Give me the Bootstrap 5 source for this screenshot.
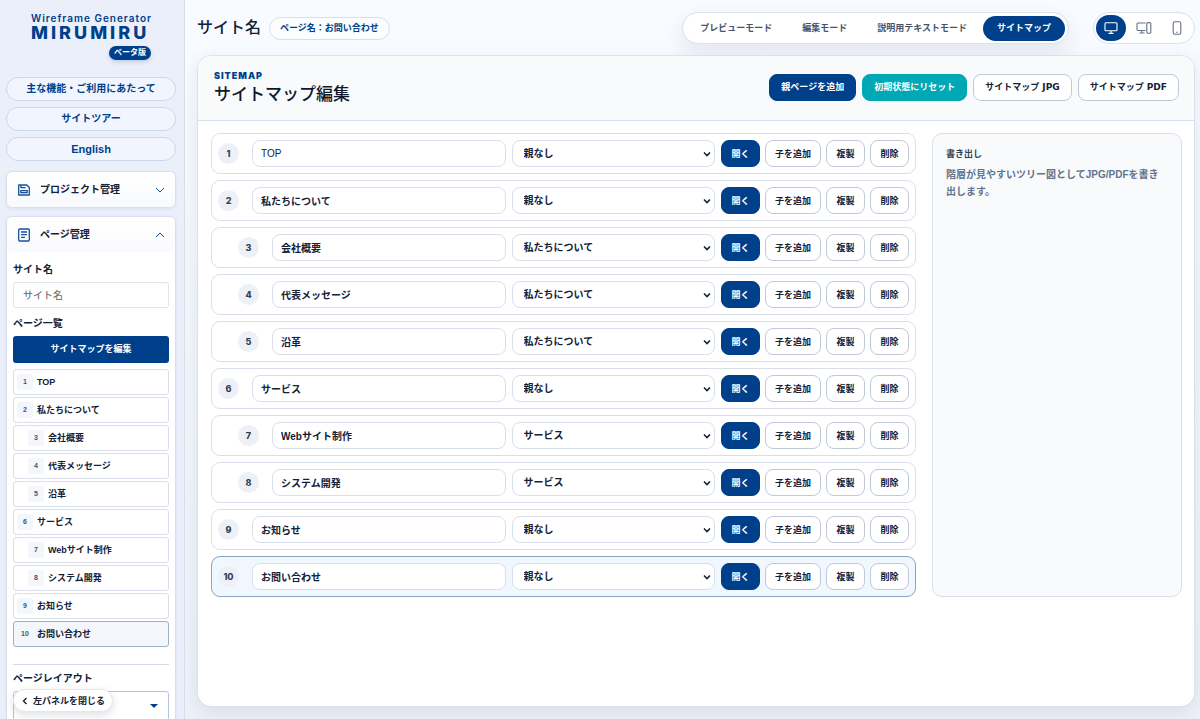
<!DOCTYPE html>
<html lang="ja">
<head>
<meta charset="utf-8">
<meta name="viewport" content="width=device-width, initial-scale=1">
<title>MIRUMIRU – サイトマップ編集</title>
<link href="https://cdn.jsdelivr.net/npm/bootstrap@5.3.0/dist/css/bootstrap.min.css" rel="stylesheet">
<style>
:root{--navy:#003f8a;--teal:#00a8b5;--ink:#142136;--line:#d9dfea;--jp:"Liberation Sans","Noto Sans CJK JP",sans-serif}
body{font-family:var(--jp);font-size:10px;line-height:16px;font-weight:700;color:var(--ink);background:linear-gradient(#f8fbff,#eef1f8)}
button,input,select{font-weight:inherit;color:inherit}
.btn{font-weight:700}
.app-shell{height:100vh;min-height:480px}
.side{width:185px;background:#ebeff9;border-right:1px solid #d6deed;position:relative}
.side-scroll{height:100%;overflow-y:auto;scrollbar-width:none;padding:14px 8px 0 6px}
.side-scroll::-webkit-scrollbar{display:none}
.brand{width:120px;color:var(--navy);margin:0 0 17px 25px}
.brand-sub{font:600 10px/9px Inter,sans-serif;letter-spacing:1px;white-space:nowrap}
.brand-name{font:800 18px/20px Inter,sans-serif;letter-spacing:3px}
.beta{background:var(--navy);color:#fff;font-size:8px;line-height:14px;padding:0 5px;box-shadow:0 2px 4px #003f8a30;margin-top:3px}
.side-pills{gap:6px;margin-bottom:10px}
.side-pill{height:24px;border:1px solid #c9d8ee;background:#f1f6fe;color:var(--navy);font-size:10px;line-height:16px;padding:0}
.side-pill:lang(en){font-size:11px}
.side-card{background:#fff;border:1px solid #d8e0ee;border-radius:6px;box-shadow:0 1px 3px #1f3f7014}
.side-head{height:35px;width:100%;border:0;background:linear-gradient(#fff,#f8fafd);border-radius:6px;padding:0 10px;gap:9px}
.side-head svg{color:#17509a}
.side-body{padding:10px 6px 40px}
.side-input{height:26px;font-size:10px;padding:0 9px;border:1px solid #e1e5ec;border-radius:3px;font-weight:500}
.side-input::placeholder{color:#777}
.side-main,.side-main:hover{height:27px;background:var(--navy);color:#fff;border:0;border-radius:3px;font-size:9px;padding:0}
.page-list{gap:2px;margin-top:6px}
.page-item-btn{height:26px;border:1px solid #d9dfea;border-radius:3px;background:#fff;padding:0 3px;gap:4px;font-size:9px;text-align:left}
.page-item-btn.nested{padding-left:14px}
.page-item-btn i{width:16px;height:16px;line-height:16px;border-radius:3px;background:#f3f6fa;font-size:7px;font-style:normal;text-align:center;color:#475569;flex:none}
.page-item-btn.current{background:#f3f6fb;border-color:#9eb0cc}
.layout-block{border-top:1px solid #d5dce8;margin-top:17px;padding-top:6px}
.layout-select{height:30px;border:1px solid #b8c6da;border-radius:3px;padding:0 30px 0 10px;font-size:10px;background-color:#fff;background-position:right 9px center;background-size:10px;background-image:url("data:image/svg+xml,%3Csvg xmlns='http://www.w3.org/2000/svg' viewBox='0 0 10 10'%3E%3Cpath d='M1 3h8L5 7z' fill='%23003f8a'/%3E%3C/svg%3E")}
.side-close{position:absolute;left:13px;bottom:7px;height:23px;border:1px solid #e3e7ee;background:#fff;box-shadow:0 3px 8px #1f2f5026;padding:0 7px 0 8px;gap:5px;font-size:9px}
.workspace{padding:12px 5px 12px 12px}
.topbar{margin-bottom:11px;min-height:32px}
.site-title{font-size:16px;line-height:24px;font-weight:500}
.page-chip{border:1px solid #d4e0ef;background:#fbfdff;color:var(--navy);height:23px;font-size:9px;line-height:21px;padding:0 10px}
.mode-bar,.device-bar{background:#fff;border:1px solid #dae1ec;height:32px}
.mode-bar{padding:0 3px;box-shadow:0 8px 20px #1f2f5018;gap:2px}
.device-bar{padding:0 2px;gap:3px}
.mode-btn{height:25px;font-size:9px;line-height:16px;padding:0 14px;color:#46536a;border:0}
.mode-btn.active{background:var(--navy)!important;color:#fff!important}
.device-btn{width:30px;height:26px;padding:0;border:0;color:#667085;background:none}
.device-btn.active{background:var(--navy);color:#fff}
.editor{background:#fff;border:1px solid #dce2ec;border-radius:14px;box-shadow:0 6px 18px #1f2f5018;overflow:hidden}
.editor-head{background:#f8fafc;border-bottom:1px solid var(--line);padding:11px 15px 13px 16px;min-height:65px}
.eyebrow{font:900 9px/15px Inter,sans-serif;letter-spacing:1px;color:var(--navy)}
.editor-title{font-size:17px;line-height:24px;font-weight:500;margin:0;color:#0f172a}
.tool-btn{height:27px;border:1px solid #c1c9d8;border-radius:8px;background:#fff;font:700 9px/16px "DejaVu Sans","Noto Sans CJK JP",sans-serif;padding:0 9px;min-width:39px;white-space:nowrap}
.tool-btn.solid{background:var(--navy);border-color:var(--navy);color:#fff}
.tool-btn.reset{background:var(--teal);border-color:var(--teal);color:#fff}
.head-tools{gap:6px}
.head-tools .tool-btn{padding:0 11px}
.editor-body{display:grid;grid-template-columns:minmax(0,1fr) 250px;gap:16px;padding:12px 12px 13px 13px;align-items:stretch}
.tree{gap:6px}
.tree-row{display:grid;grid-template-columns:minmax(0,287fr) minmax(0,203fr) auto;gap:6px;align-items:center;border:1px solid var(--line);border-radius:9px;padding:6px;background:#fff}
.tree-row.current{background:#f1f7fe;border-color:#8ba2c4}
.name-cell{gap:13px}
.name-cell.nested{padding-left:20px}
.num{width:21px;height:21px;background:#edf1f7;font:800 9px/21px Inter,sans-serif;text-align:center;color:#334155;flex:none}
.field{height:27px;width:100%;min-width:0;border:1px solid var(--line);border-radius:8px;background:#fff;font-size:10px;padding:0 8px 1px}
.field.latin{font-weight:400}
select.field{padding:0 16px 0 11px;appearance:none;background:#fff url("data:image/svg+xml,%3Csvg xmlns='http://www.w3.org/2000/svg' viewBox='0 0 8 8'%3E%3Cpath d='M1 2.5l3 3 3-3' fill='none' stroke='%23142136' stroke-width='1.6'/%3E%3C/svg%3E") no-repeat right 3px center/8px}
.actions{gap:5px}
.export-box{background:#f8fafc;border:1px solid var(--line);border-radius:10px;padding:12px 13px}
.export-box p{font-size:10px;line-height:17px;color:#64748b;margin:4px 0 0}
.export-box h2{font-size:9px;line-height:16px;margin:0;font-weight:700;color:#334155}
</style>
</head>
<body>
<div class="app-shell d-flex">
  <aside class="side flex-shrink-0">
    <div class="side-scroll">
      <div class="brand d-flex flex-column">
        <span class="brand-sub">Wireframe Generator</span>
        <span class="brand-name">MIRUMIRU</span>
        <span class="beta rounded-pill align-self-end">ベータ版</span>
      </div>
      <div class="side-pills d-grid">
        <button class="btn side-pill rounded-pill" type="button">主な機能・ご利用にあたって</button>
        <button class="btn side-pill rounded-pill" type="button">サイトツアー</button>
        <button class="btn side-pill rounded-pill" type="button" lang="en">English</button>
      </div>
      <section class="side-card mb-2">
        <button class="side-head d-flex align-items-center" type="button" aria-expanded="false">
          <svg width="14" height="14" viewBox="0 0 14 14" fill="none" stroke="currentColor" stroke-width="1.3" stroke-linejoin="round"><path d="M1.7 2h8l2.6 2.5V12H1.7zM4 2v2.6h4.6M3.8 9.6V7.6h6.4v2z"/></svg>
          <span>プロジェクト管理</span>
          <svg class="ms-auto" width="10" height="10" viewBox="0 0 10 10" fill="none" stroke="currentColor"><path d="M1 3l4 4 4-4"/></svg>
        </button>
      </section>
      <section class="side-card">
        <button class="side-head d-flex align-items-center" type="button" aria-expanded="true">
          <svg width="14" height="14" viewBox="0 0 14 14" fill="none" stroke="currentColor" stroke-width="1.3"><rect x="1.7" y="1" width="10.6" height="12" rx="1"/><path d="M4 4h6M4 6.7h6M4 9.4h4"/></svg>
          <span>ページ管理</span>
          <svg class="ms-auto" width="10" height="10" viewBox="0 0 10 10" fill="none" stroke="currentColor"><path d="M1 7l4-4 4 4"/></svg>
        </button>
        <div class="side-body">
          <label for="siteName" class="d-block mb-1">サイト名</label>
          <input id="siteName" class="form-control side-input mb-2" placeholder="サイト名">
          <div class="mb-1">ページ一覧</div>
          <button class="btn side-main w-100" type="button">サイトマップを編集</button>
          <nav id="pageList" class="page-list d-grid" aria-label="ページ一覧"></nav>
          <div class="layout-block">
            <label for="layoutSel" class="d-block mb-1">ページレイアウト</label>
            <select id="layoutSel" class="form-select layout-select"><option></option></select>
          </div>
        </div>
      </section>
    </div>
    <button class="side-close rounded-pill d-flex align-items-center" type="button">
      <svg width="6" height="8" viewBox="0 0 6 8" fill="none" stroke="currentColor" stroke-width="1.4"><path d="M4.5 1L1.5 4l3 3"/></svg>左パネルを閉じる
    </button>
  </aside>

  <main class="workspace d-flex flex-column flex-grow-1">
    <header class="topbar d-flex align-items-center">
      <span class="site-title me-2">サイト名</span>
      <span class="page-chip rounded-pill">ページ名：お問い合わせ</span>
      <nav class="mode-bar rounded-pill d-flex align-items-center ms-auto me-4" aria-label="表示モード">
        <button class="btn mode-btn rounded-pill" type="button">プレビューモード</button>
        <button class="btn mode-btn rounded-pill" type="button">編集モード</button>
        <button class="btn mode-btn rounded-pill" type="button">説明用テキストモード</button>
        <button class="btn mode-btn rounded-pill active" type="button">サイトマップ</button>
      </nav>
      <div class="device-bar rounded-pill d-flex align-items-center">
        <button class="device-btn rounded-pill active" type="button" aria-label="デスクトップ"><svg width="14" height="14" viewBox="0 0 14 14" fill="none" stroke="currentColor" stroke-width="1.1"><rect x="1" y="1.8" width="12" height="8" rx="1"/><path d="M7 9.8v2.4M4.5 12.4h5"/></svg></button>
        <button class="device-btn rounded-pill" type="button" aria-label="デスクトップとモバイル"><svg width="16" height="14" viewBox="0 0 16 14" fill="none" stroke="currentColor" stroke-width="1.1"><path d="M9.5 9.5H2a1 1 0 0 1-1-1V3a1 1 0 0 1 1-1h7.5M5.8 9.5v2.4M3.5 12h5"/><rect x="10.8" y="1.6" width="4" height="10.6" rx="1"/></svg></button>
        <button class="device-btn rounded-pill" type="button" aria-label="モバイル"><svg width="14" height="14" viewBox="0 0 14 14" fill="none" stroke="currentColor" stroke-width="1.1"><rect x="3.2" y=".7" width="7.6" height="12.6" rx="1.5"/><path d="M6.2 11.2h1.6"/></svg></button>
      </div>
    </header>

    <section class="editor flex-grow-1">
      <div class="editor-head d-flex align-items-center justify-content-between">
        <div>
          <div class="eyebrow">SITEMAP</div>
          <h1 class="editor-title">サイトマップ編集</h1>
        </div>
        <div class="head-tools d-flex">
          <button class="tool-btn solid" type="button">親ページを追加</button>
          <button class="tool-btn reset" type="button">初期状態にリセット</button>
          <button class="tool-btn" type="button">サイトマップ JPG</button>
          <button class="tool-btn" type="button">サイトマップ PDF</button>
        </div>
      </div>
      <div class="editor-body">
        <div id="tree" class="tree d-grid"></div>
        <aside class="export-box">
          <h2>書き出し</h2>
          <p>階層が見やすいツリー図としてJPG/PDFを書き出します。</p>
        </aside>
      </div>
    </section>
  </main>
</div>
<script src="https://cdn.jsdelivr.net/npm/bootstrap@5.3.0/dist/js/bootstrap.bundle.min.js"></script>
<script>
const pages = [
  ["TOP"], ["私たちについて"], ["会社概要", "私たちについて"], ["代表メッセージ", "私たちについて"], ["沿革", "私たちについて"],
  ["サービス"], ["Webサイト制作", "サービス"], ["システム開発", "サービス"], ["お知らせ"], ["お問い合わせ"]
];
const current = 9;
pages.forEach(([name, parent], i) => {
  const nested = parent ? " nested" : "", cur = i === current ? " current" : "";
  pageList.insertAdjacentHTML("beforeend",
    `<button type="button" class="page-item-btn d-flex align-items-center${nested}${cur}"><i>${i + 1}</i><span>${name}</span></button>`);
  tree.insertAdjacentHTML("beforeend",
    `<div class="tree-row${cur}">
      <div class="name-cell d-flex align-items-center${nested}"><span class="num rounded-circle">${i + 1}</span>
        <input class="field${name === "TOP" ? " latin" : ""}" value="${name}" aria-label="ページ名 ${i + 1}"></div>
      <select class="field" aria-label="親ページ ${i + 1}"><option>${parent || "親なし"}</option></select>
      <div class="actions d-flex"><button type="button" class="tool-btn solid">開く</button><button type="button" class="tool-btn">子を追加</button><button type="button" class="tool-btn">複製</button><button type="button" class="tool-btn">削除</button></div>
    </div>`);
});
</script>
</body>
</html>
